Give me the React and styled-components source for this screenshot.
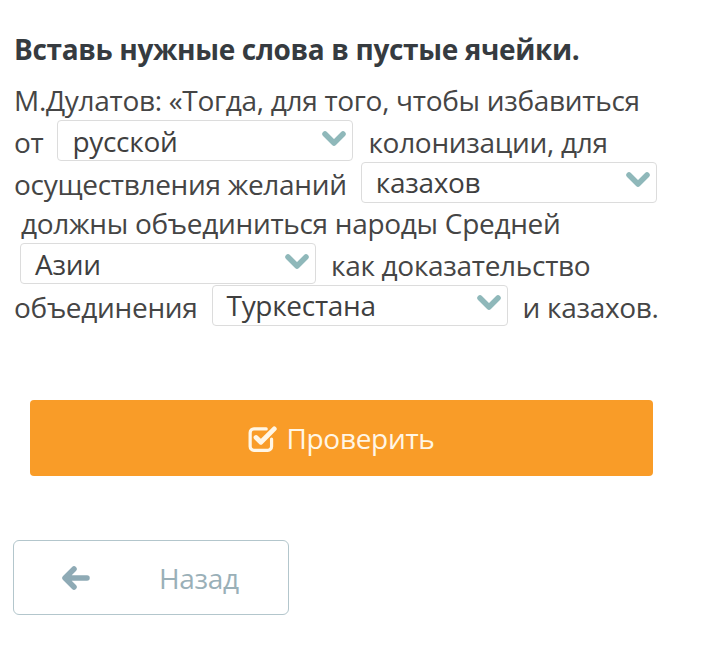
import React from "react";
import styled, { createGlobalStyle } from "styled-components";

const GlobalStyle = createGlobalStyle`
  body {
    margin: 0;
    background: #fff;
    font-family: "Open Sans", "Noto Sans", sans-serif;
  }
`;

const Page = styled.div`
  padding: 28px 14px 40px 14px;
  width: 701px;
  box-sizing: border-box;
`;

const Title = styled.h1`
  margin: 0 0 10px 0;
  font-size: 28px;
  font-weight: 700;
  letter-spacing: -0.35px;
  line-height: 42px;
  color: #363b40;
`;

const Paragraph = styled.div`
  font-size: 28px;
  letter-spacing: -0.3px;
  line-height: 40px;
  color: #454545;
`;

const Dropdown = styled.span`
  display: inline-flex;
  align-items: center;
  justify-content: space-between;
  box-sizing: border-box;
  width: 296px;
  height: 41px;
  margin: 0 ${(p) => p.$right || 15}px 0 ${(p) => p.$left || 14}px;
  padding: 0 6px 0 14px;
  border: 1px solid #dcdcdc;
  border-radius: 4px;
  vertical-align: 1px;
  background: #fff;
  color: #3f3f3f;
  line-height: 1;
`;

const Chevron = styled.svg`
  width: 24px;
  height: 16px;
  flex: none;
  margin-bottom: 4px;
`;

const Actions = styled.div`
  padding: 74px 34px 0 16px;
`;

const CheckButton = styled.button`
  display: flex;
  align-items: center;
  justify-content: center;
  gap: 8px;
  width: 623px;
  height: 76px;
  border: none;
  border-radius: 4px;
  background: #f99c28;
  color: #fff6e6;
  font-family: inherit;
  font-size: 28px;
  letter-spacing: -0.3px;
  padding: 0;
`;

const BackButton = styled.button`
  display: flex;
  align-items: center;
  box-sizing: border-box;
  width: 276px;
  height: 75px;
  margin: 64px 0 0 -17px;
  padding: 0 0 0 48px;
  gap: 69px;
  border: 1px solid #b3c6cc;
  border-radius: 6px;
  background: #fff;
  color: #9ab0b8;
  font-family: inherit;
  font-size: 28px;
  letter-spacing: -0.3px;
`;

const Icon = styled.svg`
  flex: none;
  width: ${(p) => p.$w}px;
  height: ${(p) => p.$h}px;
`;

function Select({ value, left, right }) {
  return (
    <Dropdown $left={left} $right={right}>
      {value}
      <Chevron viewBox="0 0 24 16">
        <polyline
          points="3,3 12,12 21,3"
          fill="none"
          stroke="#8fb8ba"
          strokeWidth="5.5"
          strokeLinecap="round"
          strokeLinejoin="round"
        />
      </Chevron>
    </Dropdown>
  );
}

function CheckSquare() {
  return (
    <Icon $w={30} $h={30} viewBox="0 0 28 28">
      <path
        d="M22 15 V22 a3.5 3.5 0 0 1 -3.5 3.5 H5.5 a3.5 3.5 0 0 1 -3.5 -3.5 V9 a3.5 3.5 0 0 1 3.5 -3.5 H17"
        fill="none"
        stroke="#fff6e6"
        strokeWidth="3"
        strokeLinecap="round"
      />
      <polyline
        points="7.5,13.5 12,18 24.5,5.5"
        fill="none"
        stroke="#fff6e6"
        strokeWidth="4.5"
        strokeLinecap="round"
        strokeLinejoin="round"
      />
    </Icon>
  );
}

function ArrowLeft() {
  return (
    <Icon $w={28} $h={24} viewBox="0 0 28 24">
      <path
        d="M12 3 L3 12 L12 21 M4 12 H25"
        fill="none"
        stroke="#8eaab5"
        strokeWidth="5.5"
        strokeLinecap="round"
        strokeLinejoin="round"
      />
    </Icon>
  );
}

export default function App() {
  return (
    <Page>
      <GlobalStyle />
      <Title>Вставь нужные слова в пустые ячейки.</Title>
      <Paragraph>
        М.Дулатов: «Тогда, для того, чтобы избавиться
        <br />
        от<Select value="русской" />колонизации, для
        <br />
        осуществления желаний<Select value="казахов" />
        <br />
        {"\u00a0"}должны объединиться народы Средней
        <br />
        <Select value="Азии" left={6} />как доказательство
        <br />
        объединения<Select value="Туркестана" />и казахов.
      </Paragraph>
      <Actions>
        <CheckButton>
          <CheckSquare />
          Проверить
        </CheckButton>
        <BackButton>
          <ArrowLeft />
          Назад
        </BackButton>
      </Actions>
    </Page>
  );
}
